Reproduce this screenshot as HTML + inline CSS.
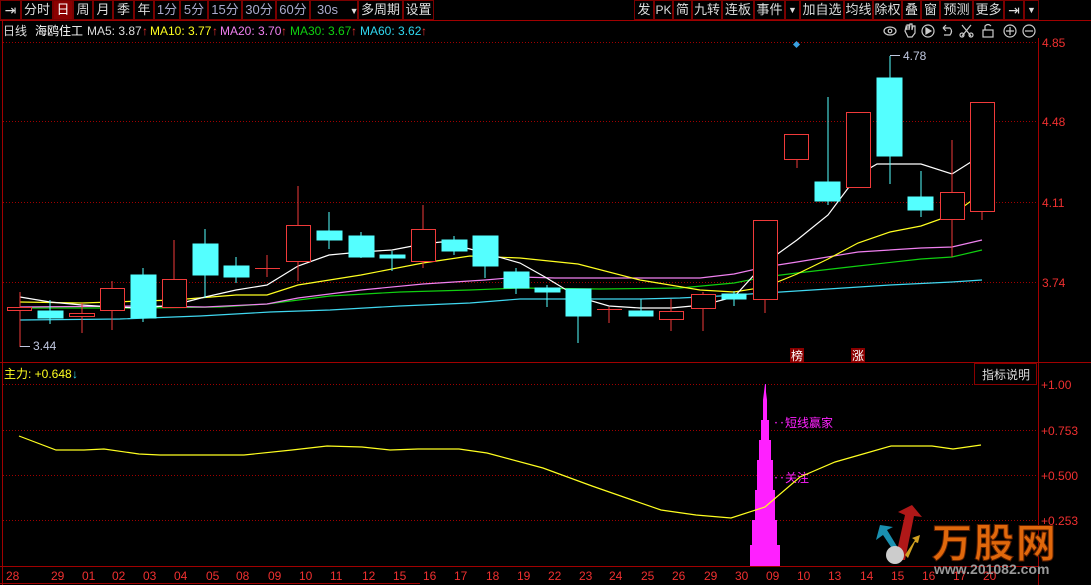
<!DOCTYPE html>
<html><head><meta charset="utf-8"><style>
*{margin:0;padding:0;box-sizing:border-box}
body{width:1091px;height:585px;background:#000;overflow:hidden;font-family:"Liberation Sans","Noto Sans CJK SC",sans-serif;position:relative}
.tb{position:absolute;top:0;height:20px;border:1px solid #7a0000;color:#ddd;font-size:13px;line-height:18px;text-align:center;background:#000;white-space:nowrap;overflow:hidden}
.sel{background:#8a0000;color:#fff}
svg{position:absolute;left:0;top:0}
</style></head><body>
<svg width="1091" height="585" font-family="Liberation Sans,Noto Sans CJK SC,sans-serif">
<line x1="0" y1="20.5" x2="1091" y2="20.5" stroke="#a00000"/>
<line x1="2.5" y1="20" x2="2.5" y2="585" stroke="#a00000"/>
<line x1="1038.5" y1="38" x2="1038.5" y2="585" stroke="#a00000"/>
<line x1="0" y1="362.5" x2="1091" y2="362.5" stroke="#a00000"/>
<line x1="0" y1="566.5" x2="1038" y2="566.5" stroke="#a00000"/>
<line x1="0" y1="583.5" x2="420" y2="583.5" stroke="#a00000"/>
<g stroke="#a00000" stroke-dasharray="1,2">
<line x1="3" y1="42.5" x2="1038" y2="42.5"/><line x1="3" y1="121.5" x2="1038" y2="121.5"/>
<line x1="3" y1="202.5" x2="1038" y2="202.5"/><line x1="3" y1="282.5" x2="1038" y2="282.5"/>
<line x1="3" y1="384.5" x2="1038" y2="384.5"/><line x1="3" y1="430.5" x2="1038" y2="430.5"/>
<line x1="3" y1="475.5" x2="1038" y2="475.5"/><line x1="3" y1="520.5" x2="1038" y2="520.5"/>
</g>
<g fill="#f03030" font-size="12">
<text x="1042" y="47">4.85</text><text x="1042" y="126">4.48</text><text x="1042" y="207">4.11</text><text x="1042" y="287">3.74</text>
<text x="1041" y="389">+1.00</text><text x="1041" y="435">+0.753</text><text x="1041" y="480">+0.500</text><text x="1041" y="525">+0.253</text>
</g>
<g fill="none" stroke-width="1.2">
<polyline stroke="#40d8f0" points="20,320 120,319 200,316 270,312 330,310 400,306 470,303 520,299 640,299 680,298 720,296 765,293 828,289 890,285 952,282 982,280"/>
<polyline stroke="#10d010" points="20,308 143,308 220,307 267,304 330,296 400,292 470,290 520,288 600,289 680,288 734,283 765,277 797,273 858,266 921,259 952,257 982,250"/>
<polyline stroke="#f080f0" points="20,307 143,306 205,307 267,304 298,298 361,290 423,284 485,280 520,277 555,278 700,278 734,274 765,267 797,262 858,252 921,248 952,247 982,240"/>
<polyline stroke="#ffff20" points="20,302 82,303 143,301 174,300 236,295 267,295 298,285 361,275 423,263 470,256 520,258 578,264 640,280 700,290 734,292 765,287 797,274 828,259 858,243 890,232 921,226 952,215 982,193"/>
<polyline stroke="#ffffff" points="20,297 50,302 82,305 112,307 143,308 174,305 205,297 236,290 267,285 298,266 329,255 361,252 392,250 423,244 441,242 470,249 520,263 545,277 578,297 609,306 640,308 671,308 703,305 734,297 765,263 797,240 828,215 858,175 877,164 921,164 952,174 982,155"/>
</g>
<g stroke="#f03a3a" fill="none">
<line x1="20" y1="292" x2="20" y2="347"/><rect x="7.5" y="307.5" width="24" height="3" fill="#000"/>
<line x1="82" y1="303" x2="82" y2="333"/><rect x="69.5" y="313.5" width="25" height="3" fill="#000"/>
<line x1="112" y1="281" x2="112" y2="330"/><rect x="100.5" y="288.5" width="24" height="22" fill="#000"/>
<line x1="174" y1="240" x2="174" y2="307"/><rect x="162.5" y="279.5" width="24" height="28" fill="#000"/>
<line x1="267" y1="255" x2="267" y2="277"/><line x1="255" y1="268.5" x2="280" y2="268.5"/>
<line x1="298" y1="186" x2="298" y2="281"/><rect x="286.5" y="225.5" width="24" height="36" fill="#000"/>
<line x1="423" y1="205" x2="423" y2="268"/><rect x="411.5" y="229.5" width="24" height="32" fill="#000"/>
<line x1="609" y1="307" x2="609" y2="323"/><line x1="597" y1="309.5" x2="622" y2="309.5"/>
<line x1="671" y1="299" x2="671" y2="331"/><rect x="659.5" y="311.5" width="24" height="8" fill="#000"/>
<line x1="703" y1="292" x2="703" y2="331"/><rect x="691.5" y="294.5" width="24" height="14" fill="#000"/>
<line x1="765" y1="220" x2="765" y2="313"/><rect x="753.5" y="220.5" width="24" height="79" fill="#000"/>
<line x1="797" y1="134" x2="797" y2="168"/><rect x="784.5" y="134.5" width="24" height="25" fill="#000"/>
<rect x="846.5" y="112.5" width="24" height="75" fill="#000"/>
<line x1="952" y1="140" x2="952" y2="257"/><rect x="940.5" y="192.5" width="24" height="27" fill="#000"/>
<line x1="982" y1="102" x2="982" y2="220"/><rect x="970.5" y="102.5" width="24" height="109" fill="#000"/>
</g>
<g stroke="#54ffff" fill="#54ffff">
<line x1="50" y1="300" x2="50" y2="324"/><rect x="38" y="311" width="25" height="7"/>
<line x1="143" y1="268" x2="143" y2="322"/><rect x="131" y="275" width="25" height="43"/>
<line x1="205" y1="229" x2="205" y2="298"/><rect x="193" y="244" width="25" height="31"/>
<line x1="236" y1="257" x2="236" y2="283"/><rect x="224" y="266" width="25" height="11"/>
<line x1="329" y1="212" x2="329" y2="249"/><rect x="317" y="231" width="25" height="9"/>
<line x1="361" y1="232" x2="361" y2="258"/><rect x="349" y="236" width="25" height="21"/>
<line x1="392" y1="251" x2="392" y2="271"/><rect x="380" y="255" width="25" height="3"/>
<line x1="454" y1="236" x2="454" y2="255"/><rect x="442" y="240" width="25" height="11"/>
<line x1="485" y1="236" x2="485" y2="278"/><rect x="473" y="236" width="25" height="30"/>
<line x1="516" y1="268" x2="516" y2="294"/><rect x="504" y="272" width="25" height="16"/>
<line x1="547" y1="285" x2="547" y2="307"/><rect x="535" y="288" width="25" height="4"/>
<line x1="578" y1="289" x2="578" y2="343"/><rect x="566" y="289" width="25" height="27"/>
<line x1="641" y1="299" x2="641" y2="316"/><rect x="629" y="311" width="24" height="5"/>
<line x1="734" y1="291" x2="734" y2="306"/><rect x="722" y="294" width="24" height="5"/>
<line x1="828" y1="97" x2="828" y2="205"/><rect x="815" y="182" width="25" height="19"/>
<line x1="890" y1="56" x2="890" y2="184"/><rect x="877" y="78" width="25" height="78"/>
<line x1="921" y1="171" x2="921" y2="217"/><rect x="908" y="197" width="25" height="13"/>
</g>
<g fill="#c0c8e0" font-size="12" stroke="#c0c8e0">
<line x1="20" y1="346.5" x2="30" y2="346.5"/><text x="33" y="350" stroke="none">3.44</text>
<line x1="890" y1="55.5" x2="900" y2="55.5"/><text x="903" y="60" stroke="none">4.78</text>
</g>
<rect x="794" y="42" width="5" height="5" fill="#3aa0e0" transform="rotate(45 796.5 44.5)"/>
<rect x="790" y="348" width="14" height="14" fill="#8a0000"/><text x="791" y="360" fill="#fff" font-size="12">榜</text>
<rect x="851" y="348" width="14" height="14" fill="#8a0000"/><text x="852" y="360" fill="#fff" font-size="12">涨</text>
<g font-size="12">
<text x="3" y="35" fill="#ddd">日线</text><text x="35" y="35" fill="#fff">海鸥住工</text>
<text x="87" y="35" fill="#ddd">MA5: 3.87</text><text x="142" y="35" fill="#f03030">↑</text>
<text x="150" y="35" fill="#ffff20">MA10: 3.77</text><text x="212" y="35" fill="#f03030">↑</text>
<text x="220" y="35" fill="#f080f0">MA20: 3.70</text><text x="281" y="35" fill="#f03030">↑</text>
<text x="290" y="35" fill="#10d010">MA30: 3.67</text><text x="351" y="35" fill="#f03030">↑</text>
<text x="360" y="35" fill="#30d8f0">MA60: 3.62</text><text x="421" y="35" fill="#f03030">↑</text>
</g>
<g stroke="#ccc" fill="none" stroke-width="1.2">
<ellipse cx="890" cy="31" rx="6" ry="4"/><circle cx="890" cy="31" r="1.8"/>
<path d="M908 37 L905 31 L906 27 L907 30 L907 25 L909 25 L909 30 L910 24 L912 24 L912 30 L913 26 L915 26 L915 33 L912 37 Z"/>
<circle cx="928" cy="31" r="6"/><path d="M926 28 L931 31 L926 34 Z" fill="#ccc"/>
<path d="M943 28 L950 28 Q953 31 950 35 L944 35 M943 28 L946 25 M943 28 L946 31"/>
<path d="M962 25 L971 36 M971 25 L962 36"/><circle cx="962" cy="35" r="2"/><circle cx="971" cy="35" r="2"/>
<rect x="983" y="30" width="10" height="7"/><path d="M985 30 L985 26 Q988 23 991 26"/>
<circle cx="1010" cy="31" r="6"/><path d="M1006 31 H1014 M1010 27 V35"/>
<circle cx="1029" cy="31" r="6"/><path d="M1025 31 H1033"/>
</g>
<text x="4" y="378" font-size="12" fill="#ffff20">主力: +0.648</text><text x="72" y="378" font-size="12" fill="#30d8f0">↓</text>
<rect x="974.5" y="363.5" width="62" height="21" fill="#000" stroke="#8a0000"/>
<text x="982" y="379" font-size="12" fill="#ddd">指标说明</text>
<polygon fill="#ff20ff" points="750,566 750,545 752,545 752,520 755,520 755,490 757,490 757,460 759,460 759,440 761,440 761,420 763,420 763,400 765,384 767,400 767,420 769,420 769,440 771,440 771,460 773,460 773,490 775,490 775,520 777,520 777,545 780,545 780,566"/>
<line x1="765.5" y1="384" x2="765.5" y2="400" stroke="#ff20ff"/>
<text x="773" y="427" font-size="12" fill="#ff20ff">‥短线赢家</text>
<text x="773" y="482" font-size="12" fill="#ff20ff">‥关注</text>
<polyline fill="none" stroke="#ffff20" stroke-width="1.2" points="19,436 56,450 84,450 104,449 139,454 160,455 244,455 292,450 327,446 362,447 390,450 418,449 459,449 487,453 543,468 592,486 661,510 696,515 731,518 765,507 800,477 835,462 863,454 891,446 932,446 953,449 981,445"/>
<g fill="#f03030" font-size="12">
<text x="6" y="580">28</text><text x="51" y="580">29</text><text x="82" y="580">01</text><text x="112" y="580">02</text><text x="143" y="580">03</text><text x="174" y="580">04</text><text x="206" y="580">05</text><text x="236" y="580">08</text><text x="268" y="580">09</text><text x="299" y="580">10</text><text x="330" y="580">11</text><text x="362" y="580">12</text><text x="393" y="580">15</text><text x="423" y="580">16</text><text x="454" y="580">17</text><text x="486" y="580">18</text><text x="517" y="580">19</text><text x="548" y="580">22</text><text x="579" y="580">23</text><text x="609" y="580">24</text><text x="641" y="580">25</text><text x="672" y="580">26</text><text x="704" y="580">29</text><text x="735" y="580">30</text><text x="766" y="580">09</text><text x="797" y="580">10</text><text x="828" y="580">13</text><text x="860" y="580">14</text><text x="891" y="580">15</text><text x="922" y="580">16</text><text x="953" y="580">17</text><text x="983" y="580">20</text>
</g>
<path d="M895 560 L905 515 L898 512 L912 505 L922 517 L914 516 L905 560 Z" fill="#b01818"/>
<path d="M893 550 L883 535 L876 540 L880 525 L893 527 L887 530 L898 548 Z" fill="#1a90b0"/>
<path d="M905 555 L915 540 L912 538 L920 535 L918 543 L915 542 L908 558 Z" fill="#d0a020"/>
<circle cx="895" cy="555" r="9" fill="#ccc"/>
<text x="932" y="557" font-size="40" font-weight="bold" fill="#e0680c" stroke="#602000" stroke-width="1" letter-spacing="2">万股网</text>
<text x="934" y="574" font-size="14" font-weight="bold" fill="#999">www.201082.com</text>
</svg>
<div class="tb" style="left:0;width:21px;font-size:14px">⇥</div>
<div class="tb" style="left:21px;width:32px">分时</div>
<div class="tb sel" style="left:53px;width:20px">日</div>
<div class="tb" style="left:73px;width:20px">周</div>
<div class="tb" style="left:93px;width:20px">月</div>
<div class="tb" style="left:113px;width:21px">季</div>
<div class="tb" style="left:134px;width:20px">年</div>
<div class="tb" style="left:154px;width:26px;color:#aac">1分</div>
<div class="tb" style="left:180px;width:28px;color:#aac">5分</div>
<div class="tb" style="left:208px;width:34px;color:#aac">15分</div>
<div class="tb" style="left:242px;width:34px;color:#aac">30分</div>
<div class="tb" style="left:276px;width:34px;color:#aac">60分</div>
<div class="tb" style="left:310px;width:48px;color:#aac;text-align:left;padding-left:6px">30s <span style="color:#ddd;font-size:9px;padding-left:8px">▼</span></div>
<div class="tb" style="left:358px;width:45px">多周期</div>
<div class="tb" style="left:403px;width:31px">设置</div>
<div class="tb" style="left:634px;width:20px">发</div>
<div class="tb" style="left:654px;width:19px;font-size:12px">PK</div>
<div class="tb" style="left:673px;width:19px">简</div>
<div class="tb" style="left:692px;width:30px">九转</div>
<div class="tb" style="left:722px;width:32px">连板</div>
<div class="tb" style="left:754px;width:31px">事件</div>
<div class="tb" style="left:785px;width:15px;font-size:9px">▼</div>
<div class="tb" style="left:800px;width:44px">加自选</div>
<div class="tb" style="left:844px;width:29px">均线</div>
<div class="tb" style="left:873px;width:29px">除权</div>
<div class="tb" style="left:902px;width:19px">叠</div>
<div class="tb" style="left:921px;width:19px">窗</div>
<div class="tb" style="left:940px;width:33px">预测</div>
<div class="tb" style="left:973px;width:31px">更多</div>
<div class="tb" style="left:1004px;width:20px;font-size:14px">⇥</div>
<div class="tb" style="left:1024px;width:15px;font-size:9px">▼</div>
</body></html>
